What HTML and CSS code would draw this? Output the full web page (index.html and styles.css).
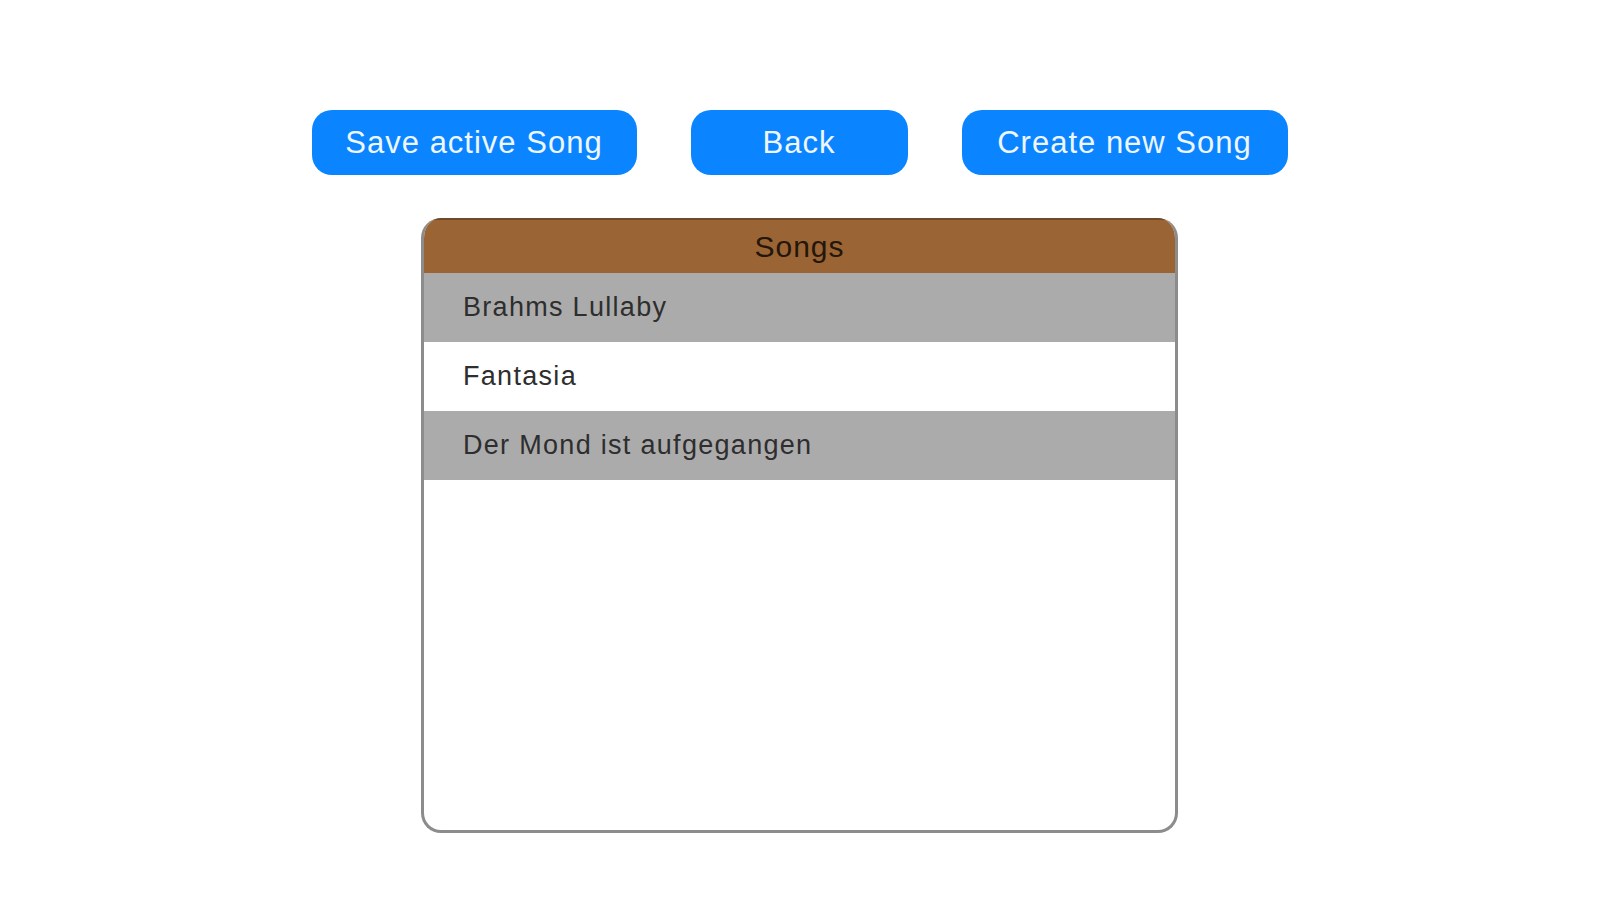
FILE: index.html
```html
<!DOCTYPE html>
<html lang="de">
<head>
<meta charset="utf-8">
<title>Songs</title>
<link rel="stylesheet" href="styles.css">
</head>
<body>
<main class="page">
  <div class="actions">
    <button class="btn btn-save">Save active Song</button>
    <button class="btn btn-back">Back</button>
    <button class="btn btn-create">Create new Song</button>
  </div>
  <section class="songs">
    <div class="songs-header">Songs</div>
    <ul class="song-list">
      <li class="song song-alt">Brahms Lullaby</li>
      <li class="song">Fantasia</li>
      <li class="song song-alt">Der Mond ist aufgegangen</li>
    </ul>
  </section>
</main>
</body>
</html>
```
FILE: styles.css
```css
html, body {
  margin: 0;
  padding: 0;
  background: #ffffff;
}
body {
  font-family: "Liberation Sans", Arial, sans-serif;
}
.page {
  display: flex;
  flex-direction: column;
  align-items: center;
  padding-top: 110px;
}
.actions {
  display: flex;
  gap: 54px;
}
.btn {
  height: 65px;
  border: none;
  border-radius: 20px;
  background: #0a84ff;
  color: #eef6ff;
  font-family: "Liberation Sans", Arial, sans-serif;
  font-size: 31px;
  letter-spacing: 1px;
  padding: 0;
  cursor: pointer;
}
.btn-save { width: 325px; }
.btn-back { width: 217px; }
.btn-create { width: 326px; }
.songs {
  margin-top: 43px;
  width: 757px;
  height: 615px;
  box-sizing: border-box;
  border: 3px solid #8c8c8c;
  border-top: none;
  border-radius: 20px;
  overflow: hidden;
  background: #ffffff;
}
.songs-header {
  height: 55px;
  background: #9a6434;
  color: #24160a;
  font-size: 30px;
  letter-spacing: 1px;
  display: flex;
  align-items: center;
  justify-content: center;
  margin: 0 -3px;
  border-top: 2px solid #6e4a2a;
  box-sizing: border-box;
}
.song-list {
  list-style: none;
  margin: 0;
  padding: 0;
}
.song {
  height: 69px;
  display: flex;
  align-items: center;
  padding-left: 39px;
  font-size: 27px;
  letter-spacing: 1.3px;
  color: #2e2e2e;
}
.song-alt {
  background: #ababab;
}
```
